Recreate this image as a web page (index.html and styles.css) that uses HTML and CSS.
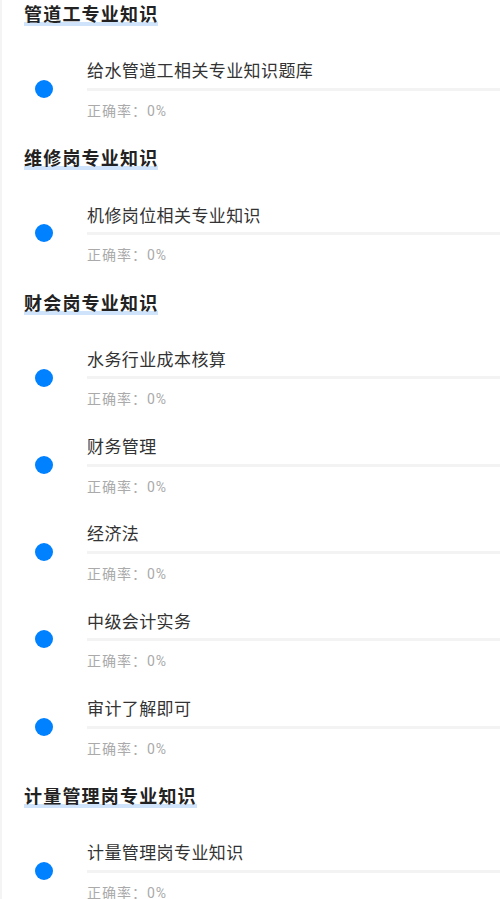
FILE: index.html
```html
<!DOCTYPE html>
<html lang="zh-CN">
<head>
    <meta charset="UTF-8">
    <title>专业知识</title>
    <link rel="stylesheet" href="styles.css">
</head>
<body>
<div class="page">
    <div class="section">
        <h2 class="sec-title"><span>管道工专业知识</span></h2>
        <div class="item">
            <i class="dot"></i>
            <div class="info">
                <p class="name">给水管道工相关专业知识题库</p>
                <div class="bar"></div>
                <p class="rate">正确率：0%</p>
            </div>
        </div>
    </div>
    <div class="section">
        <h2 class="sec-title"><span>维修岗专业知识</span></h2>
        <div class="item">
            <i class="dot"></i>
            <div class="info">
                <p class="name">机修岗位相关专业知识</p>
                <div class="bar"></div>
                <p class="rate">正确率：0%</p>
            </div>
        </div>
    </div>
    <div class="section">
        <h2 class="sec-title"><span>财会岗专业知识</span></h2>
        <div class="item">
            <i class="dot"></i>
            <div class="info">
                <p class="name">水务行业成本核算</p>
                <div class="bar"></div>
                <p class="rate">正确率：0%</p>
            </div>
        </div>
        <div class="item">
            <i class="dot"></i>
            <div class="info">
                <p class="name">财务管理</p>
                <div class="bar"></div>
                <p class="rate">正确率：0%</p>
            </div>
        </div>
        <div class="item">
            <i class="dot"></i>
            <div class="info">
                <p class="name">经济法</p>
                <div class="bar"></div>
                <p class="rate">正确率：0%</p>
            </div>
        </div>
        <div class="item">
            <i class="dot"></i>
            <div class="info">
                <p class="name">中级会计实务</p>
                <div class="bar"></div>
                <p class="rate">正确率：0%</p>
            </div>
        </div>
        <div class="item">
            <i class="dot"></i>
            <div class="info">
                <p class="name">审计了解即可</p>
                <div class="bar"></div>
                <p class="rate">正确率：0%</p>
            </div>
        </div>
    </div>
    <div class="section">
        <h2 class="sec-title"><span>计量管理岗专业知识</span></h2>
        <div class="item">
            <i class="dot"></i>
            <div class="info">
                <p class="name">计量管理岗专业知识</p>
                <div class="bar"></div>
                <p class="rate">正确率：0%</p>
            </div>
        </div>
    </div>
</div>
</body>
</html>
```

FILE: styles.css
```css
*{margin: 0;padding: 0;box-sizing: border-box;}
body{background: #fff;font-family: Roboto, "Noto Sans CJK SC", sans-serif;overflow: hidden;}
.page{border-left: 2px solid #f4f4f4;min-height: 899px;}
.sec-title{height: 57px;padding: 4px 0 0 22px;font-size: 18px;line-height: 22px;font-weight: bold;color: #222;letter-spacing: 1.2px;}
.sec-title span{display: inline-block;background: linear-gradient(#cfe4fa, #cfe4fa) no-repeat left bottom / 100% 4px;}
.item{height: 87.3px;padding: 2px 0 23.3px 33px;display: flex;align-items: center;}
.dot{display: block;width: 18px;height: 18px;border-radius: 50%;background: #0081ff;margin: 0 34px 2px 0;flex-shrink: 0;}
.info{flex: 1;}
.name{font-size: 17px;line-height: 24px;color: #333;letter-spacing: 0.4px;}
.bar{height: 3px;margin-top: 4.5px;background: #f3f3f3;}
.rate{margin-top: 10px;font-size: 14px;line-height: 20px;color: #aaa;letter-spacing: 1px;}
```
